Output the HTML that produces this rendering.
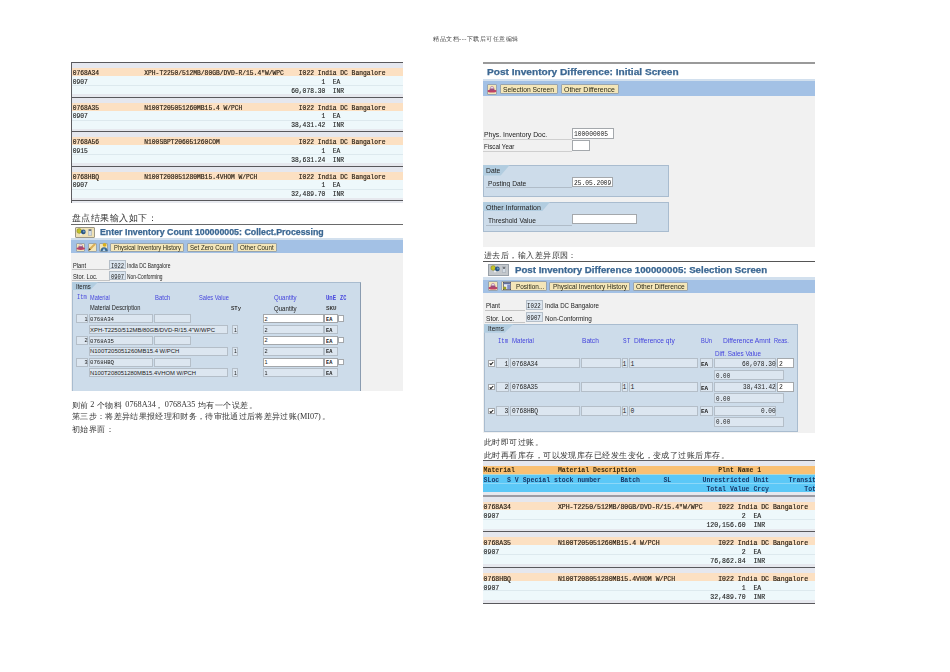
<!DOCTYPE html><html><head><meta charset="utf-8"><style>
*{margin:0;padding:0;box-sizing:border-box}
body{width:950px;height:672px;position:relative;background:#fff;overflow:hidden}
div{position:absolute}
.t{white-space:pre;line-height:1}
.m1{font-family:"Liberation Mono",monospace;font-size:6.29px;color:#404040;font-weight:bold}
.m2{font-family:"Liberation Mono",monospace;font-size:6.525px;color:#404040;font-weight:bold}
.cn{font-family:"Liberation Serif",serif;color:#333;letter-spacing:0.45px}
.s{font-family:"Liberation Sans",sans-serif;color:#303030}
.ttl{font-family:"Liberation Sans",sans-serif;font-weight:bold;color:#3d6c9c}
.hb{font-family:"Liberation Sans",sans-serif;color:#3c3ccc}
.btn{background:#f4e6b8;border:1px solid #98a4ae;border-radius:1px}
.fd{background:#dce6f0;border:1px solid #b4bec8}
.fi{background:#fff;border:1px solid #a4a8ac}
</style></head><body><div id="pg" style="left:0;top:0;width:950px;height:672px;filter:blur(0.3px)"><div class="t cn" style="left:433px;top:35.5px;font-size:6.4px;color:#444;letter-spacing:0.5px">精品文档---下载后可任意编辑</div>
<div style="left:71px;top:62px;width:332px;height:1px;background:#58585c"></div>
<div style="left:71px;top:63px;width:332px;height:5px;background:#e5e7ee"></div>
<div style="left:71px;top:68px;width:332px;height:8px;background:#fce0c2"></div>
<div style="left:71px;top:76px;width:332px;height:9px;background:#eef8fb"></div>
<div style="left:71px;top:85px;width:332px;height:1px;background:#dde9ee"></div>
<div style="left:71px;top:86px;width:332px;height:8px;background:#eef8fb"></div>
<div style="left:71px;top:94px;width:332px;height:3px;background:#e6e8ee"></div>
<div class="t m1" style="left:72.7px;top:71.0px;font-weight:normal;color:#2e2418;-webkit-text-stroke:0.18px #2e2418">0768A34            XPH-T2250/512MB/80GB/DVD-R/15.4"W/WPC    I022 India DC Bangalore</div>
<div class="t m1" style="left:72.7px;top:79.5px;font-weight:normal;color:#222;-webkit-text-stroke:0.12px #222">0907                                                              1  EA</div>
<div class="t m1" style="left:72.7px;top:88.6px;font-weight:normal;color:#222;-webkit-text-stroke:0.12px #222">                                                          60,078.30  INR</div>
<div style="left:71px;top:97px;width:332px;height:1px;background:#58585c"></div>
<div style="left:71px;top:98px;width:332px;height:5px;background:#e5e7ee"></div>
<div style="left:71px;top:103px;width:332px;height:8px;background:#fce0c2"></div>
<div style="left:71px;top:111px;width:332px;height:9px;background:#eef8fb"></div>
<div style="left:71px;top:120px;width:332px;height:1px;background:#dde9ee"></div>
<div style="left:71px;top:121px;width:332px;height:8px;background:#eef8fb"></div>
<div style="left:71px;top:129px;width:332px;height:2px;background:#e6e8ee"></div>
<div class="t m1" style="left:72.7px;top:105.5px;font-weight:normal;color:#2e2418;-webkit-text-stroke:0.18px #2e2418">0768A35            N100T205051260MB15.4 W/PCH               I022 India DC Bangalore</div>
<div class="t m1" style="left:72.7px;top:114.0px;font-weight:normal;color:#222;-webkit-text-stroke:0.12px #222">0907                                                              1  EA</div>
<div class="t m1" style="left:72.7px;top:123.1px;font-weight:normal;color:#222;-webkit-text-stroke:0.12px #222">                                                          38,431.42  INR</div>
<div style="left:71px;top:131px;width:332px;height:1px;background:#58585c"></div>
<div style="left:71px;top:132px;width:332px;height:5px;background:#e5e7ee"></div>
<div style="left:71px;top:137px;width:332px;height:8px;background:#fce0c2"></div>
<div style="left:71px;top:145px;width:332px;height:9px;background:#eef8fb"></div>
<div style="left:71px;top:154px;width:332px;height:1px;background:#dde9ee"></div>
<div style="left:71px;top:155px;width:332px;height:8px;background:#eef8fb"></div>
<div style="left:71px;top:163px;width:332px;height:3px;background:#e6e8ee"></div>
<div class="t m1" style="left:72.7px;top:140.0px;font-weight:normal;color:#2e2418;-webkit-text-stroke:0.18px #2e2418">0768A56            N100SBPT206051260COM                     I022 India DC Bangalore</div>
<div class="t m1" style="left:72.7px;top:148.5px;font-weight:normal;color:#222;-webkit-text-stroke:0.12px #222">0915                                                              1  EA</div>
<div class="t m1" style="left:72.7px;top:157.6px;font-weight:normal;color:#222;-webkit-text-stroke:0.12px #222">                                                          38,631.24  INR</div>
<div style="left:71px;top:166px;width:332px;height:1px;background:#58585c"></div>
<div style="left:71px;top:167px;width:332px;height:5px;background:#e5e7ee"></div>
<div style="left:71px;top:172px;width:332px;height:8px;background:#fce0c2"></div>
<div style="left:71px;top:180px;width:332px;height:9px;background:#eef8fb"></div>
<div style="left:71px;top:189px;width:332px;height:1px;background:#dde9ee"></div>
<div style="left:71px;top:190px;width:332px;height:8px;background:#eef8fb"></div>
<div style="left:71px;top:198px;width:332px;height:2px;background:#e6e8ee"></div>
<div class="t m1" style="left:72.7px;top:174.5px;font-weight:normal;color:#2e2418;-webkit-text-stroke:0.18px #2e2418">0768HBQ            N100T208051280MB15.4VHOM W/PCH           I022 India DC Bangalore</div>
<div class="t m1" style="left:72.7px;top:183.0px;font-weight:normal;color:#222;-webkit-text-stroke:0.12px #222">0907                                                              1  EA</div>
<div class="t m1" style="left:72.7px;top:192.1px;font-weight:normal;color:#222;-webkit-text-stroke:0.12px #222">                                                          32,489.70  INR</div>
<div style="left:71px;top:200px;width:332px;height:1px;background:#58585c"></div>
<div style="left:71px;top:201px;width:332px;height:2px;background:#e8eaf0"></div>
<div style="left:71px;top:62px;width:1px;height:141px;background:#5e5e62"></div>
<div class="t cn" style="left:72px;top:213.8px;font-size:8.6px">盘点结果输入如下：</div>
<!--SCREEN1-->
<div style="left:71px;top:224px;width:332px;height:1px;background:#6a6a6a"></div>
<div style="left:75.4px;top:227.3px;width:19.4px;height:10.3px;background:#efe2b6;border:1px solid #9c9888;border-radius:1px"></div>
<svg style="position:absolute;left:76.2px;top:228.2px" width="18" height="9" viewBox="0 0 18 9"><circle cx="3.2" cy="3.0" r="2.4" fill="#c4c428" stroke="#707020" stroke-width="0.4"/><circle cx="7.3" cy="3.9" r="2.4" fill="#2a5682"/><circle cx="7.8" cy="3.4" r="1" fill="#6a9ac8"/><path d="M5,5.2 L6.2,6.5 L5,7.8 L3.8,6.5Z" fill="#eef2f6"/><rect x="12.2" y="1.8" width="3.6" height="5.6" fill="#d4dce4" stroke="#909aa4" stroke-width="0.4"/><rect x="12.8" y="1.6" width="2.4" height="1" fill="#333"/></svg>
<div class="t" style="left:100.00px;top:229.41px;font-family:'Liberation Sans',sans-serif;font-weight:bold;font-size:8.140px;transform:scaleX(1.0840);transform-origin:0 0;color:#3b6792;-webkit-text-stroke:0.25px #3b6792">Enter Inventory Count 100000005: Collect.Processing</div>
<div style="left:71px;top:238px;width:332px;height:2px;background:#d2e0ee"></div>
<div style="left:71px;top:240px;width:332px;height:13px;background:#a3c1e5"></div>
<div class="btn" style="left:75.6px;top:242.6px;width:9.6px;height:9.2px"></div>
<div class="btn" style="left:87.5px;top:242.6px;width:9.6px;height:9.2px"></div>
<div class="btn" style="left:98.7px;top:242.6px;width:9.6px;height:9.2px"></div>
<svg style="position:absolute;left:75.9px;top:242.4px" width="9.5" height="9.5" viewBox="0 0 10 10"><ellipse cx="5" cy="6.9" rx="4.4" ry="1.5" fill="#bf4266"/><path d="M2.5,6.6 Q2.6,2.4 5,2.3 Q7.4,2.4 7.5,6.6 Z" fill="#9a4c7a"/><path d="M3.1,4.6 Q3.3,2.5 5,2.4 Q6.7,2.5 6.9,4.6 Z" fill="#e4dce6"/></svg>
<svg style="position:absolute;left:87.2px;top:242.4px" width="10" height="10" viewBox="0 0 10 10"><path d="M1.5,8.5 L2.2,6.2 L7.4,1.2 L8.9,2.6 L3.8,7.8 Z" fill="#d9ae58"/><path d="M1.5,8.5 L2.2,6.2 L3.8,7.8 Z" fill="#3a3020"/></svg>
<svg style="position:absolute;left:98.5px;top:242.4px" width="10" height="10" viewBox="0 0 10 10"><circle cx="5.6" cy="2.8" r="1.9" fill="#d8b020"/><path d="M1.3,9.2 Q1.8,5.2 5,5.2 Q8.4,5.2 8.8,9.2 Z" fill="#3a6a94"/><path d="M3.5,9 L5,6.2 L6.5,9Z" fill="#b8d8f0"/></svg>
<div class="btn" style="left:110.3px;top:242.7px;width:73.9px;height:9px"></div>
<div class="t" style="left:113.80px;top:244.94px;font-family:'Liberation Sans',sans-serif;font-weight:normal;font-size:6.686px;transform:scaleX(0.8711);transform-origin:0 0;color:#2a2a1a;">Physical Inventory History</div>
<div class="btn" style="left:187.4px;top:242.7px;width:46.8px;height:9px"></div>
<div class="t" style="left:190.00px;top:244.94px;font-family:'Liberation Sans',sans-serif;font-weight:normal;font-size:6.686px;transform:scaleX(0.9176);transform-origin:0 0;color:#2a2a1a;">Set Zero Count</div>
<div class="btn" style="left:237.4px;top:242.7px;width:39.4px;height:9px"></div>
<div class="t" style="left:240.00px;top:244.94px;font-family:'Liberation Sans',sans-serif;font-weight:normal;font-size:6.686px;transform:scaleX(0.9253);transform-origin:0 0;color:#2a2a1a;">Other Count</div>
<div style="left:71px;top:253px;width:332px;height:138px;background:#f1f1f1"></div>
<div class="t" style="left:73.20px;top:262.67px;font-family:'Liberation Sans',sans-serif;font-weight:normal;font-size:7.122px;transform:scaleX(0.8009);transform-origin:0 0;color:#222;">Plant</div>
<div style="left:72px;top:269px;width:37.5px;height:1px;background:#c4c4c4"></div>
<div class="fd" style="left:109.2px;top:260.2px;width:16.6px;height:9px"></div>
<div class="t" style="left:111.00px;top:262.88px;font-family:'Liberation Mono',monospace;font-weight:normal;font-size:6.677px;transform:scaleX(0.8237);transform-origin:0 0;color:#222;">I022</div>
<div class="t" style="left:127.40px;top:262.67px;font-family:'Liberation Sans',sans-serif;font-weight:normal;font-size:7.122px;transform:scaleX(0.6998);transform-origin:0 0;color:#222;">India DC Bangalore</div>
<div class="t" style="left:73.20px;top:273.87px;font-family:'Liberation Sans',sans-serif;font-weight:normal;font-size:7.122px;transform:scaleX(0.8142);transform-origin:0 0;color:#222;">Stor. Loc.</div>
<div style="left:72px;top:280px;width:37.5px;height:1px;background:#c4c4c4"></div>
<div class="fd" style="left:109.2px;top:271.2px;width:16.6px;height:9px"></div>
<div class="t" style="left:111.00px;top:273.98px;font-family:'Liberation Mono',monospace;font-weight:normal;font-size:6.677px;transform:scaleX(0.8237);transform-origin:0 0;color:#222;">0907</div>
<div class="t" style="left:127.40px;top:273.87px;font-family:'Liberation Sans',sans-serif;font-weight:normal;font-size:7.122px;transform:scaleX(0.6814);transform-origin:0 0;color:#222;">Non-Conforming</div>
<div style="left:72.2px;top:282.1px;width:288.6px;height:108.8px;background:#cddcea;border:1px solid #a9bccf;border-bottom:0;border-right-color:#8a9cb0"></div>
<svg style="position:absolute;left:72.2px;top:282.1px" width="26" height="8.4"><polygon points="0,0 26,0 18,8.4 0,8.4" fill="#b2cde0"/></svg>
<div class="t" style="left:75.50px;top:283.66px;font-family:'Liberation Sans',sans-serif;font-weight:normal;font-size:6.541px;transform:scaleX(0.9192);transform-origin:0 0;color:#222;">Items</div>
<div class="t" style="left:77.20px;top:295.30px;font-family:'Liberation Mono',monospace;font-weight:normal;font-size:6.525px;transform:scaleX(0.8174);transform-origin:0 0;color:#4444dd;">Itm</div>
<div class="t" style="left:90.20px;top:294.54px;font-family:'Liberation Sans',sans-serif;font-weight:normal;font-size:6.686px;transform:scaleX(0.8326);transform-origin:0 0;color:#4444dd;">Material</div>
<div class="t" style="left:155.00px;top:294.94px;font-family:'Liberation Sans',sans-serif;font-weight:normal;font-size:6.686px;transform:scaleX(0.8891);transform-origin:0 0;color:#4444dd;">Batch</div>
<div class="t" style="left:199.30px;top:294.94px;font-family:'Liberation Sans',sans-serif;font-weight:normal;font-size:6.686px;transform:scaleX(0.8497);transform-origin:0 0;color:#4444dd;">Sales Value</div>
<div class="t" style="left:274.30px;top:294.94px;font-family:'Liberation Sans',sans-serif;font-weight:normal;font-size:6.686px;transform:scaleX(0.9117);transform-origin:0 0;color:#4444dd;">Quantity</div>
<div class="t" style="left:325.80px;top:295.28px;font-family:'Liberation Mono',monospace;font-weight:bold;font-size:6.677px;transform:scaleX(0.8404);transform-origin:0 0;color:#4444dd;">UnE</div>
<div class="t" style="left:339.70px;top:295.28px;font-family:'Liberation Mono',monospace;font-weight:bold;font-size:6.677px;transform:scaleX(0.7863);transform-origin:0 0;color:#4444dd;">ZC</div>
<div class="t" style="left:90.20px;top:305.44px;font-family:'Liberation Sans',sans-serif;font-weight:normal;font-size:6.686px;transform:scaleX(0.8548);transform-origin:0 0;color:#222;">Material Description</div>
<div class="t" style="left:230.50px;top:306.25px;font-family:'Liberation Mono',monospace;font-weight:bold;font-size:6.070px;transform:scaleX(0.9244);transform-origin:0 0;color:#383838;">STy</div>
<div class="t" style="left:274.30px;top:305.84px;font-family:'Liberation Sans',sans-serif;font-weight:normal;font-size:6.686px;transform:scaleX(0.9117);transform-origin:0 0;color:#222;">Quantity</div>
<div class="t" style="left:325.80px;top:306.25px;font-family:'Liberation Mono',monospace;font-weight:bold;font-size:6.070px;transform:scaleX(0.9610);transform-origin:0 0;color:#383838;">SKU</div>
<div class="fd" style="left:75.5px;top:314.4px;width:12.8px;height:9px"></div>
<div class="t" style="left:84.60px;top:316.82px;font-family:'Liberation Sans',sans-serif;font-weight:normal;font-size:5.523px;color:#222;">1</div>
<div class="fd" style="left:88.6px;top:314.4px;width:64.6px;height:9px"></div>
<div class="t" style="left:90.20px;top:317.11px;font-family:'Liberation Mono',monospace;font-weight:normal;font-size:5.463px;transform:scaleX(1.0501);transform-origin:0 0;color:#222;">0768A34</div>
<div class="fd" style="left:153.8px;top:314.4px;width:37px;height:9px"></div>
<div class="fi" style="left:263.4px;top:314.4px;width:60.4px;height:9px"></div>
<div class="t" style="left:264.60px;top:316.82px;font-family:'Liberation Sans',sans-serif;font-weight:normal;font-size:5.523px;color:#222;">2</div>
<div class="fi" style="left:324.1px;top:314.4px;width:13.5px;height:9px"></div>
<div class="t" style="left:325.80px;top:317.08px;font-family:'Liberation Mono',monospace;font-weight:bold;font-size:5.766px;transform:scaleX(0.9097);transform-origin:0 0;color:#222;">EA</div>
<div class="fi" style="left:338.4px;top:315.4px;width:5.9px;height:6.3px"></div>
<div class="fd" style="left:88.6px;top:325.2px;width:139.6px;height:8.8px"></div>
<div class="t" style="left:90.20px;top:327.62px;font-family:'Liberation Sans',sans-serif;font-weight:normal;font-size:5.523px;transform:scaleX(1.0743);transform-origin:0 0;color:#222;">XPH-T2250/512MB/80GB/DVD-R/15.4"W/WPC</div>
<div class="fd" style="left:232.3px;top:325.2px;width:6px;height:8.8px"></div>
<div class="t" style="left:234.00px;top:327.67px;font-family:'Liberation Sans',sans-serif;font-weight:normal;font-size:5.233px;color:#222;">1</div>
<div class="fd" style="left:263.4px;top:325.2px;width:60.4px;height:8.8px"></div>
<div class="t" style="left:264.60px;top:327.62px;font-family:'Liberation Sans',sans-serif;font-weight:normal;font-size:5.523px;color:#222;">2</div>
<div class="fd" style="left:324.1px;top:325.2px;width:13.5px;height:8.8px"></div>
<div class="t" style="left:325.80px;top:327.88px;font-family:'Liberation Mono',monospace;font-weight:bold;font-size:5.766px;transform:scaleX(0.9097);transform-origin:0 0;color:#222;">EA</div>
<div class="fd" style="left:75.5px;top:335.95px;width:12.8px;height:9px"></div>
<div class="t" style="left:84.60px;top:338.37px;font-family:'Liberation Sans',sans-serif;font-weight:normal;font-size:5.523px;color:#222;">2</div>
<div class="fd" style="left:88.6px;top:335.95px;width:64.6px;height:9px"></div>
<div class="t" style="left:90.20px;top:338.66px;font-family:'Liberation Mono',monospace;font-weight:normal;font-size:5.463px;transform:scaleX(1.0501);transform-origin:0 0;color:#222;">0768A35</div>
<div class="fd" style="left:153.8px;top:335.95px;width:37px;height:9px"></div>
<div class="fi" style="left:263.4px;top:335.95px;width:60.4px;height:9px"></div>
<div class="t" style="left:264.60px;top:338.37px;font-family:'Liberation Sans',sans-serif;font-weight:normal;font-size:5.523px;color:#222;">2</div>
<div class="fi" style="left:324.1px;top:335.95px;width:13.5px;height:9px"></div>
<div class="t" style="left:325.80px;top:338.63px;font-family:'Liberation Mono',monospace;font-weight:bold;font-size:5.766px;transform:scaleX(0.9097);transform-origin:0 0;color:#222;">EA</div>
<div class="fi" style="left:338.4px;top:336.95px;width:5.9px;height:6.3px"></div>
<div class="fd" style="left:88.6px;top:346.75px;width:139.6px;height:8.8px"></div>
<div class="t" style="left:90.20px;top:349.17px;font-family:'Liberation Sans',sans-serif;font-weight:normal;font-size:5.523px;transform:scaleX(1.0757);transform-origin:0 0;color:#222;">N100T205051260MB15.4 W/PCH</div>
<div class="fd" style="left:232.3px;top:346.75px;width:6px;height:8.8px"></div>
<div class="t" style="left:234.00px;top:349.22px;font-family:'Liberation Sans',sans-serif;font-weight:normal;font-size:5.233px;color:#222;">1</div>
<div class="fd" style="left:263.4px;top:346.75px;width:60.4px;height:8.8px"></div>
<div class="t" style="left:264.60px;top:349.17px;font-family:'Liberation Sans',sans-serif;font-weight:normal;font-size:5.523px;color:#222;">2</div>
<div class="fd" style="left:324.1px;top:346.75px;width:13.5px;height:8.8px"></div>
<div class="t" style="left:325.80px;top:349.43px;font-family:'Liberation Mono',monospace;font-weight:bold;font-size:5.766px;transform:scaleX(0.9097);transform-origin:0 0;color:#222;">EA</div>
<div class="fd" style="left:75.5px;top:357.5px;width:12.8px;height:9px"></div>
<div class="t" style="left:84.60px;top:359.92px;font-family:'Liberation Sans',sans-serif;font-weight:normal;font-size:5.523px;color:#222;">3</div>
<div class="fd" style="left:88.6px;top:357.5px;width:64.6px;height:9px"></div>
<div class="t" style="left:90.20px;top:360.21px;font-family:'Liberation Mono',monospace;font-weight:normal;font-size:5.463px;transform:scaleX(1.0501);transform-origin:0 0;color:#222;">0768HBQ</div>
<div class="fd" style="left:153.8px;top:357.5px;width:37px;height:9px"></div>
<div class="fi" style="left:263.4px;top:357.5px;width:60.4px;height:9px"></div>
<div class="t" style="left:264.60px;top:359.92px;font-family:'Liberation Sans',sans-serif;font-weight:normal;font-size:5.523px;color:#222;">1</div>
<div class="fi" style="left:324.1px;top:357.5px;width:13.5px;height:9px"></div>
<div class="t" style="left:325.80px;top:360.18px;font-family:'Liberation Mono',monospace;font-weight:bold;font-size:5.766px;transform:scaleX(0.9097);transform-origin:0 0;color:#222;">EA</div>
<div class="fi" style="left:338.4px;top:358.5px;width:5.9px;height:6.3px"></div>
<div class="fd" style="left:88.6px;top:368.3px;width:139.6px;height:8.8px"></div>
<div class="t" style="left:90.20px;top:370.72px;font-family:'Liberation Sans',sans-serif;font-weight:normal;font-size:5.523px;transform:scaleX(1.0644);transform-origin:0 0;color:#222;">N100T208051280MB15.4VHOM W/PCH</div>
<div class="fd" style="left:232.3px;top:368.3px;width:6px;height:8.8px"></div>
<div class="t" style="left:234.00px;top:370.77px;font-family:'Liberation Sans',sans-serif;font-weight:normal;font-size:5.233px;color:#222;">1</div>
<div class="fd" style="left:263.4px;top:368.3px;width:60.4px;height:8.8px"></div>
<div class="t" style="left:264.60px;top:370.72px;font-family:'Liberation Sans',sans-serif;font-weight:normal;font-size:5.523px;color:#222;">1</div>
<div class="fd" style="left:324.1px;top:368.3px;width:13.5px;height:8.8px"></div>
<div class="t" style="left:325.80px;top:370.98px;font-family:'Liberation Mono',monospace;font-weight:bold;font-size:5.766px;transform:scaleX(0.9097);transform-origin:0 0;color:#222;">EA</div>
<div class="t cn" style="left:72px;top:401.5px;font-size:8.4px">则前</div>
<div class="t cn" style="left:90.3px;top:401.2px;font-size:8.2px;letter-spacing:0">2</div>
<div class="t cn" style="left:97px;top:401.5px;font-size:8.4px">个物料</div>
<div class="t cn" style="left:125.3px;top:401.2px;font-size:8.2px;letter-spacing:0">0768A34</div>
<div class="t cn" style="left:155px;top:401.5px;font-size:8.4px">，</div>
<div class="t cn" style="left:164.8px;top:401.2px;font-size:8.2px;letter-spacing:0">0768A35</div>
<div class="t cn" style="left:198px;top:401.5px;font-size:8.4px">均有一个误差。</div>
<div class="t cn" style="left:72px;top:413.3px;font-size:8.4px;letter-spacing:0.33px">第三步：将差异结果报经理和财务，待审批通过后将差异过账</div>
<div class="t cn" style="left:297.2px;top:413px;font-size:8.2px;letter-spacing:0">(MI07)</div>
<div class="t cn" style="left:321.5px;top:413.3px;font-size:8.4px">。</div>
<div class="t cn" style="left:72px;top:426.3px;font-size:8.4px">初始界面：</div>
<!--SCREEN2-->
<div style="left:483px;top:62px;width:332px;height:2px;background:#9a9a9a"></div>
<div class="t" style="left:486.60px;top:68.17px;font-family:'Liberation Sans',sans-serif;font-weight:bold;font-size:9.012px;transform:scaleX(1.1237);transform-origin:0 0;color:#3b6792;-webkit-text-stroke:0.25px #3b6792">Post Inventory Difference: Initial Screen</div>
<div style="left:483px;top:79px;width:332px;height:2px;background:#d2e0ee"></div>
<div style="left:483px;top:81px;width:332px;height:15px;background:#a3c1e5"></div>
<div class="btn" style="left:486.5px;top:84px;width:10.5px;height:10.5px"></div>
<svg style="position:absolute;left:486.8px;top:84.2px" width="10.0" height="10.0" viewBox="0 0 10 10"><ellipse cx="5" cy="6.9" rx="4.4" ry="1.5" fill="#bf4266"/><path d="M2.5,6.6 Q2.6,2.4 5,2.3 Q7.4,2.4 7.5,6.6 Z" fill="#9a4c7a"/><path d="M3.1,4.6 Q3.3,2.5 5,2.4 Q6.7,2.5 6.9,4.6 Z" fill="#e4dce6"/></svg>
<div class="btn" style="left:499.8px;top:83.8px;width:58.5px;height:10.5px"></div>
<div class="t" style="left:503.20px;top:86.92px;font-family:'Liberation Sans',sans-serif;font-weight:normal;font-size:6.831px;transform:scaleX(0.9856);transform-origin:0 0;color:#2a2a1a;">Selection Screen</div>
<div class="btn" style="left:561px;top:83.8px;width:58.2px;height:10.5px"></div>
<div class="t" style="left:564.00px;top:86.92px;font-family:'Liberation Sans',sans-serif;font-weight:normal;font-size:6.831px;transform:scaleX(1.0202);transform-origin:0 0;color:#2a2a1a;">Other Difference</div>
<div style="left:483px;top:96px;width:332px;height:151px;background:#f1f1f1"></div>
<div class="t" style="left:484.00px;top:130.95px;font-family:'Liberation Sans',sans-serif;font-weight:normal;font-size:7.267px;transform:scaleX(0.9456);transform-origin:0 0;color:#222;">Phys. Inventory Doc.</div>
<div style="left:483px;top:138.5px;width:89.2px;height:1.2px;background:#cfcfcf"></div>
<div class="fi" style="left:572.2px;top:128.2px;width:41.5px;height:10.8px"></div>
<div class="t" style="left:573.90px;top:131.25px;font-family:'Liberation Mono',monospace;font-weight:normal;font-size:6.980px;transform:scaleX(0.9045);transform-origin:0 0;color:#222;">100000005</div>
<div class="t" style="left:484.00px;top:142.75px;font-family:'Liberation Sans',sans-serif;font-weight:normal;font-size:7.267px;transform:scaleX(0.8579);transform-origin:0 0;color:#222;">Fiscal Year</div>
<div style="left:483px;top:150.6px;width:89.2px;height:1.2px;background:#cfcfcf"></div>
<div class="fi" style="left:572.2px;top:140.4px;width:18.1px;height:11px"></div>
<div style="left:483.2px;top:165.2px;width:185.4px;height:31.4px;background:#cddcea;border:1px solid #a9bccf"></div>
<svg style="position:absolute;left:483.2px;top:165.2px" width="26.7" height="10.4"><polygon points="0,0 26.7,0 17.7,10.4 0,10.4" fill="#b2cde0"/></svg>
<div class="t" style="left:485.90px;top:167.25px;font-family:'Liberation Sans',sans-serif;font-weight:normal;font-size:7.267px;transform:scaleX(0.9317);transform-origin:0 0;color:#222;">Date</div>
<div class="t" style="left:487.70px;top:179.85px;font-family:'Liberation Sans',sans-serif;font-weight:normal;font-size:7.267px;transform:scaleX(0.9228);transform-origin:0 0;color:#222;">Posting Date</div>
<div style="left:486.3px;top:187.1px;width:85.9px;height:1px;background:#b0bcc8"></div>
<div class="fi" style="left:572.2px;top:177.3px;width:41.3px;height:10.1px"></div>
<div class="t" style="left:573.90px;top:180.25px;font-family:'Liberation Mono',monospace;font-weight:normal;font-size:6.980px;transform:scaleX(0.8928);transform-origin:0 0;color:#222;">25.05.2009</div>
<div style="left:483.2px;top:202.2px;width:185.4px;height:30.3px;background:#cddcea;border:1px solid #a9bccf"></div>
<svg style="position:absolute;left:483.2px;top:202.2px" width="67.1" height="9.3"><polygon points="0,0 67.1,0 59.099999999999994,9.3 0,9.3" fill="#b2cde0"/></svg>
<div class="t" style="left:485.90px;top:203.99px;font-family:'Liberation Sans',sans-serif;font-weight:normal;font-size:6.977px;transform:scaleX(1.0113);transform-origin:0 0;color:#222;">Other Information</div>
<div class="t" style="left:488.00px;top:216.65px;font-family:'Liberation Sans',sans-serif;font-weight:normal;font-size:7.267px;transform:scaleX(0.9163);transform-origin:0 0;color:#222;">Threshold Value</div>
<div style="left:486.3px;top:224.5px;width:85.9px;height:1px;background:#b0bcc8"></div>
<div class="fi" style="left:572.2px;top:213.6px;width:64.8px;height:10.9px"></div>
<div class="t cn" style="left:484px;top:251.5px;font-size:8.4px">进去后，输入差异原因：</div>
<!--SCREEN3-->
<div style="left:483px;top:261px;width:332px;height:1px;background:#555"></div>
<div style="left:488.2px;top:264.2px;width:20.8px;height:11.4px;background:#c4c8cc;border:1px solid #98a0a8"></div>
<svg style="position:absolute;left:489.6px;top:265.2px" width="18" height="9" viewBox="0 0 18 9"><circle cx="3.2" cy="3.0" r="2.4" fill="#c4c428" stroke="#707020" stroke-width="0.4"/><circle cx="7.3" cy="3.9" r="2.4" fill="#2a5682"/><circle cx="7.8" cy="3.4" r="1" fill="#6a9ac8"/><path d="M5,5.2 L6.2,6.5 L5,7.8 L3.8,6.5Z" fill="#eef2f6"/><rect x="12.2" y="1.8" width="3.6" height="5.6" fill="#d4dce4" stroke="#909aa4" stroke-width="0.4"/><path d="M12.6,2.4 L15.4,2.4 L14,4 Z" fill="#111"/></svg>
<div class="t" style="left:514.90px;top:266.44px;font-family:'Liberation Sans',sans-serif;font-weight:bold;font-size:8.576px;transform:scaleX(1.1295);transform-origin:0 0;color:#3b6792;-webkit-text-stroke:0.25px #3b6792">Post Inventory Difference 100000005: Selection Screen</div>
<div style="left:483px;top:277px;width:332px;height:3px;background:#d2e0ee"></div>
<div style="left:483px;top:280px;width:332px;height:13px;background:#a3c1e5"></div>
<div class="btn" style="left:488.3px;top:281px;width:10.1px;height:10.4px"></div>
<svg style="position:absolute;left:488.4px;top:281.2px" width="10.0" height="10.0" viewBox="0 0 10 10"><ellipse cx="5" cy="6.9" rx="4.4" ry="1.5" fill="#bf4266"/><path d="M2.5,6.6 Q2.6,2.4 5,2.3 Q7.4,2.4 7.5,6.6 Z" fill="#9a4c7a"/><path d="M3.1,4.6 Q3.3,2.5 5,2.4 Q6.7,2.5 6.9,4.6 Z" fill="#e4dce6"/></svg>
<div class="btn" style="left:501.3px;top:281.4px;width:46px;height:10px"></div>
<svg style="position:absolute;left:503.3px;top:282.4px" width="8" height="8" viewBox="0 0 8 8"><rect x="0.3" y="0.3" width="7.4" height="7.4" fill="#e8ecf4" stroke="#303040" stroke-width="0.6"/><rect x="0.6" y="0.6" width="6.8" height="1.6" fill="#6070a0"/><rect x="4.2" y="2.6" width="3" height="4.6" fill="#8090c8"/><circle cx="1.8" cy="6" r="1.6" fill="#a0a020"/></svg>
<div class="t" style="left:515.70px;top:283.19px;font-family:'Liberation Sans',sans-serif;font-weight:normal;font-size:6.977px;transform:scaleX(0.9238);transform-origin:0 0;color:#2a2a1a;">Position...</div>
<div class="btn" style="left:549.3px;top:281.6px;width:80.8px;height:9.7px"></div>
<div class="t" style="left:552.60px;top:283.92px;font-family:'Liberation Sans',sans-serif;font-weight:normal;font-size:6.831px;transform:scaleX(0.9429);transform-origin:0 0;color:#2a2a1a;">Physical Inventory History</div>
<div class="btn" style="left:632.6px;top:281.6px;width:55.6px;height:9.7px"></div>
<div class="t" style="left:636.00px;top:283.92px;font-family:'Liberation Sans',sans-serif;font-weight:normal;font-size:6.831px;transform:scaleX(0.9762);transform-origin:0 0;color:#2a2a1a;">Other Difference</div>
<div style="left:483px;top:293px;width:332px;height:140px;background:#f1f1f1"></div>
<div class="t" style="left:485.90px;top:302.92px;font-family:'Liberation Sans',sans-serif;font-weight:normal;font-size:6.831px;transform:scaleX(0.8928);transform-origin:0 0;color:#222;">Plant</div>
<div style="left:484.9px;top:310.2px;width:40.6px;height:1px;background:#c4c4c4"></div>
<div class="fd" style="left:525.5px;top:300.2px;width:17.2px;height:10.1px"></div>
<div class="t" style="left:527.20px;top:303.37px;font-family:'Liberation Mono',monospace;font-weight:normal;font-size:6.829px;transform:scaleX(0.8421);transform-origin:0 0;color:#222;">I022</div>
<div class="t" style="left:545.00px;top:302.92px;font-family:'Liberation Sans',sans-serif;font-weight:normal;font-size:6.831px;transform:scaleX(0.9057);transform-origin:0 0;color:#222;">India DC Bangalore</div>
<div class="t" style="left:485.90px;top:314.79px;font-family:'Liberation Sans',sans-serif;font-weight:normal;font-size:6.977px;transform:scaleX(0.9567);transform-origin:0 0;color:#222;">Stor. Loc.</div>
<div style="left:484.9px;top:322.1px;width:40.6px;height:1px;background:#c4c4c4"></div>
<div class="fd" style="left:525.5px;top:312.4px;width:17.2px;height:9.8px"></div>
<div class="t" style="left:527.20px;top:315.27px;font-family:'Liberation Mono',monospace;font-weight:normal;font-size:6.829px;transform:scaleX(0.8421);transform-origin:0 0;color:#222;">0907</div>
<div class="t" style="left:545.00px;top:314.79px;font-family:'Liberation Sans',sans-serif;font-weight:normal;font-size:6.977px;transform:scaleX(0.9144);transform-origin:0 0;color:#222;">Non-Conforming</div>
<div style="left:484px;top:324.3px;width:314px;height:107.9px;background:#cddcea;border:1px solid #a9bccf"></div>
<svg style="position:absolute;left:484px;top:324.3px" width="29.7" height="8.8"><polygon points="0,0 29.7,0 20.4,8.8 0,8.8" fill="#b2cde0"/></svg>
<div class="t" style="left:488.00px;top:326.04px;font-family:'Liberation Sans',sans-serif;font-weight:normal;font-size:6.686px;transform:scaleX(0.9787);transform-origin:0 0;color:#222;">Items</div>
<div class="t" style="left:497.90px;top:338.37px;font-family:'Liberation Mono',monospace;font-weight:normal;font-size:6.829px;transform:scaleX(0.8217);transform-origin:0 0;color:#4444dd;">Itm</div>
<div class="t" style="left:511.80px;top:337.74px;font-family:'Liberation Sans',sans-serif;font-weight:normal;font-size:6.686px;transform:scaleX(0.9209);transform-origin:0 0;color:#4444dd;">Material</div>
<div class="t" style="left:581.70px;top:337.72px;font-family:'Liberation Sans',sans-serif;font-weight:normal;font-size:6.831px;transform:scaleX(0.9618);transform-origin:0 0;color:#4444dd;">Batch</div>
<div class="t" style="left:623.00px;top:338.37px;font-family:'Liberation Mono',monospace;font-weight:normal;font-size:6.829px;transform:scaleX(0.8909);transform-origin:0 0;color:#4444dd;">ST</div>
<div class="t" style="left:634.00px;top:337.72px;font-family:'Liberation Sans',sans-serif;font-weight:normal;font-size:6.831px;transform:scaleX(0.9686);transform-origin:0 0;color:#4444dd;">Difference qty</div>
<div class="t" style="left:700.80px;top:338.02px;font-family:'Liberation Sans',sans-serif;font-weight:normal;font-size:6.831px;transform:scaleX(0.8279);transform-origin:0 0;color:#4444dd;">BUn</div>
<div class="t" style="left:723.00px;top:338.02px;font-family:'Liberation Sans',sans-serif;font-weight:normal;font-size:6.831px;transform:scaleX(0.9799);transform-origin:0 0;color:#4444dd;">Difference Amnt</div>
<div class="t" style="left:774.30px;top:338.02px;font-family:'Liberation Sans',sans-serif;font-weight:normal;font-size:6.831px;transform:scaleX(0.8238);transform-origin:0 0;color:#4444dd;">Reas.</div>
<div class="t" style="left:715.20px;top:349.99px;font-family:'Liberation Sans',sans-serif;font-weight:normal;font-size:6.977px;transform:scaleX(0.9052);transform-origin:0 0;color:#4444dd;">Diff. Sales Value</div>
<div class="fi" style="left:488.2px;top:360.20000000000005px;width:6.8px;height:6.6px"></div>
<svg style="position:absolute;left:488.2px;top:360.20000000000005px" width="7" height="7" viewBox="0 0 7 7"><path d="M1.7,3.3 L2.9,4.7 L5.2,2.0" stroke="#222" stroke-width="1.1" fill="none"/></svg>
<div class="fd" style="left:495.8px;top:358.1px;width:13.5px;height:10.1px"></div>
<div class="t" style="left:504.60px;top:361.62px;font-family:'Liberation Mono',monospace;font-weight:normal;font-size:6.373px;color:#222;">1</div>
<div class="fd" style="left:510.1px;top:358.1px;width:69.9px;height:10.1px"></div>
<div class="t" style="left:511.80px;top:361.62px;font-family:'Liberation Mono',monospace;font-weight:normal;font-size:6.373px;transform:scaleX(0.9748);transform-origin:0 0;color:#222;">0768A34</div>
<div class="fd" style="left:580.8px;top:358.1px;width:40px;height:10.1px"></div>
<div class="fd" style="left:621.7px;top:358.1px;width:6.6px;height:10.1px"></div>
<div class="t" style="left:622.60px;top:361.62px;font-family:'Liberation Mono',monospace;font-weight:normal;font-size:6.373px;color:#222;">1</div>
<div class="fd" style="left:629.3px;top:358.1px;width:69px;height:10.1px"></div>
<div class="t" style="left:630.60px;top:361.62px;font-family:'Liberation Mono',monospace;font-weight:normal;font-size:6.373px;color:#222;">1</div>
<div class="fd" style="left:699.6px;top:358.1px;width:13.6px;height:10.1px"></div>
<div class="t" style="left:700.80px;top:361.87px;font-family:'Liberation Mono',monospace;font-weight:bold;font-size:5.918px;transform:scaleX(1.0130);transform-origin:0 0;color:#222;">EA</div>
<div class="fd" style="left:714.3px;top:358.1px;width:61.9px;height:10.1px"></div>
<div class="t" style="left:741.50px;top:361.62px;font-family:'Liberation Mono',monospace;font-weight:normal;font-size:6.373px;transform:scaleX(0.9790);transform-origin:0 0;color:#222;">60,078.30</div>
<div class="fi" style="left:776.8px;top:358.1px;width:17.7px;height:10.1px"></div>
<div class="t" style="left:779.00px;top:361.62px;font-family:'Liberation Mono',monospace;font-weight:normal;font-size:6.373px;color:#222;">2</div>
<div class="fd" style="left:714.2px;top:370.3px;width:69.5px;height:10px"></div>
<div class="t" style="left:715.80px;top:373.52px;font-family:'Liberation Mono',monospace;font-weight:normal;font-size:6.373px;transform:scaleX(0.9284);transform-origin:0 0;color:#222;">0.00</div>
<div class="fi" style="left:488.2px;top:383.90000000000003px;width:6.8px;height:6.6px"></div>
<svg style="position:absolute;left:488.2px;top:383.90000000000003px" width="7" height="7" viewBox="0 0 7 7"><path d="M1.7,3.3 L2.9,4.7 L5.2,2.0" stroke="#222" stroke-width="1.1" fill="none"/></svg>
<div class="fd" style="left:495.8px;top:381.8px;width:13.5px;height:10.1px"></div>
<div class="t" style="left:504.60px;top:385.32px;font-family:'Liberation Mono',monospace;font-weight:normal;font-size:6.373px;color:#222;">2</div>
<div class="fd" style="left:510.1px;top:381.8px;width:69.9px;height:10.1px"></div>
<div class="t" style="left:511.80px;top:385.32px;font-family:'Liberation Mono',monospace;font-weight:normal;font-size:6.373px;transform:scaleX(0.9748);transform-origin:0 0;color:#222;">0768A35</div>
<div class="fd" style="left:580.8px;top:381.8px;width:40px;height:10.1px"></div>
<div class="fd" style="left:621.7px;top:381.8px;width:6.6px;height:10.1px"></div>
<div class="t" style="left:622.60px;top:385.32px;font-family:'Liberation Mono',monospace;font-weight:normal;font-size:6.373px;color:#222;">1</div>
<div class="fd" style="left:629.3px;top:381.8px;width:69px;height:10.1px"></div>
<div class="t" style="left:630.60px;top:385.32px;font-family:'Liberation Mono',monospace;font-weight:normal;font-size:6.373px;color:#222;">1</div>
<div class="fd" style="left:699.6px;top:381.8px;width:13.6px;height:10.1px"></div>
<div class="t" style="left:700.80px;top:385.57px;font-family:'Liberation Mono',monospace;font-weight:bold;font-size:5.918px;transform:scaleX(1.0130);transform-origin:0 0;color:#222;">EA</div>
<div class="fd" style="left:714.3px;top:381.8px;width:61.9px;height:10.1px"></div>
<div class="t" style="left:742.50px;top:385.32px;font-family:'Liberation Mono',monospace;font-weight:normal;font-size:6.373px;transform:scaleX(0.9500);transform-origin:0 0;color:#222;">38,431.42</div>
<div class="fi" style="left:776.8px;top:381.8px;width:17.7px;height:10.1px"></div>
<div class="t" style="left:779.00px;top:385.32px;font-family:'Liberation Mono',monospace;font-weight:normal;font-size:6.373px;color:#222;">2</div>
<div class="fd" style="left:714.2px;top:393.4px;width:69.5px;height:10px"></div>
<div class="t" style="left:715.80px;top:396.62px;font-family:'Liberation Mono',monospace;font-weight:normal;font-size:6.373px;transform:scaleX(0.9284);transform-origin:0 0;color:#222;">0.00</div>
<div class="fi" style="left:488.2px;top:407.6px;width:6.8px;height:6.6px"></div>
<svg style="position:absolute;left:488.2px;top:407.6px" width="7" height="7" viewBox="0 0 7 7"><path d="M1.7,3.3 L2.9,4.7 L5.2,2.0" stroke="#222" stroke-width="1.1" fill="none"/></svg>
<div class="fd" style="left:495.8px;top:405.5px;width:13.5px;height:10.1px"></div>
<div class="t" style="left:504.60px;top:409.02px;font-family:'Liberation Mono',monospace;font-weight:normal;font-size:6.373px;color:#222;">3</div>
<div class="fd" style="left:510.1px;top:405.5px;width:69.9px;height:10.1px"></div>
<div class="t" style="left:511.80px;top:409.02px;font-family:'Liberation Mono',monospace;font-weight:normal;font-size:6.373px;transform:scaleX(0.9748);transform-origin:0 0;color:#222;">0768HBQ</div>
<div class="fd" style="left:580.8px;top:405.5px;width:40px;height:10.1px"></div>
<div class="fd" style="left:621.7px;top:405.5px;width:6.6px;height:10.1px"></div>
<div class="t" style="left:622.60px;top:409.02px;font-family:'Liberation Mono',monospace;font-weight:normal;font-size:6.373px;color:#222;">1</div>
<div class="fd" style="left:629.3px;top:405.5px;width:69px;height:10.1px"></div>
<div class="t" style="left:630.60px;top:409.02px;font-family:'Liberation Mono',monospace;font-weight:normal;font-size:6.373px;color:#222;">0</div>
<div class="fd" style="left:699.6px;top:405.5px;width:13.6px;height:10.1px"></div>
<div class="t" style="left:700.80px;top:409.27px;font-family:'Liberation Mono',monospace;font-weight:bold;font-size:5.918px;transform:scaleX(1.0130);transform-origin:0 0;color:#222;">EA</div>
<div class="fd" style="left:714.3px;top:405.5px;width:61.9px;height:10.1px"></div>
<div class="t" style="left:760.50px;top:409.02px;font-family:'Liberation Mono',monospace;font-weight:normal;font-size:6.373px;transform:scaleX(0.9610);transform-origin:0 0;color:#222;">0.00</div>
<div class="fd" style="left:714.2px;top:416.6px;width:69.5px;height:10px"></div>
<div class="t" style="left:715.80px;top:419.82px;font-family:'Liberation Mono',monospace;font-weight:normal;font-size:6.373px;transform:scaleX(0.9284);transform-origin:0 0;color:#222;">0.00</div>
<div class="t cn" style="left:484px;top:438.8px;font-size:8.4px">此时即可过账。</div>
<div class="t cn" style="left:484px;top:451.6px;font-size:8.4px">此时再看库存，可以发现库存已经发生变化，变成了过账后库存。</div>
<!--LIST2-->
<div style="left:483px;top:460px;width:332px;height:1px;background:#5e5e62"></div>
<div style="left:483px;top:461px;width:332px;height:5px;background:#e5e7ee"></div>
<div style="left:483px;top:466px;width:332px;height:8px;background:#f9c073"></div>
<div style="left:483px;top:474px;width:332px;height:1px;background:#b4d8d0"></div>
<div style="left:483px;top:475px;width:332px;height:8px;background:#5bc8f7"></div>
<div style="left:483px;top:483px;width:332px;height:1px;background:#8cd8f8"></div>
<div style="left:483px;top:484px;width:332px;height:8px;background:#5bc8f7"></div>
<div style="left:483px;top:492px;width:332px;height:3px;background:#e6e8ee"></div>
<div class="t m2" style="left:483.6px;top:468.2px;color:#3a2a10">Material           Material Description                     Plnt Name 1</div>
<div class="t m2" style="left:483.6px;top:477.6px;color:#183868">SLoc  S V Special stock number     Batch      SL        Unrestricted Unit     Transit</div>
<div class="t m2" style="left:483.6px;top:486.6px;color:#183868">                                                         Total Value Crcy         Tot</div>
<div style="left:815px;top:455px;width:60px;height:40px;background:#fff"></div>
<div style="left:483px;top:495px;width:332px;height:2px;background:#9c9ca4"></div>
<div style="left:483px;top:497px;width:332px;height:5px;background:#e5e7ee"></div>
<div style="left:483px;top:502px;width:332px;height:8px;background:#fce0c2"></div>
<div style="left:483px;top:510px;width:332px;height:9px;background:#eef8fb"></div>
<div style="left:483px;top:519px;width:332px;height:1px;background:#dde9ee"></div>
<div style="left:483px;top:520px;width:332px;height:9px;background:#eef8fb"></div>
<div style="left:483px;top:529px;width:332px;height:2px;background:#e6e8ee"></div>
<div class="t m2" style="left:483.6px;top:505.1px;font-weight:normal;color:#2e2418;-webkit-text-stroke:0.18px #2e2418">0768A34            XPH-T2250/512MB/80GB/DVD-R/15.4"W/WPC    I022 India DC Bangalore</div>
<div class="t m2" style="left:483.6px;top:514.0px;font-weight:normal;color:#222;-webkit-text-stroke:0.12px #222">0907                                                              2  EA</div>
<div class="t m2" style="left:483.6px;top:523.2px;font-weight:normal;color:#222;-webkit-text-stroke:0.12px #222">                                                         120,156.60  INR</div>
<div style="left:483px;top:531px;width:332px;height:1px;background:#58585c"></div>
<div style="left:483px;top:532px;width:332px;height:5px;background:#e5e7ee"></div>
<div style="left:483px;top:537px;width:332px;height:8px;background:#fce0c2"></div>
<div style="left:483px;top:545px;width:332px;height:9px;background:#eef8fb"></div>
<div style="left:483px;top:554px;width:332px;height:1px;background:#dde9ee"></div>
<div style="left:483px;top:555px;width:332px;height:9px;background:#eef8fb"></div>
<div style="left:483px;top:564px;width:332px;height:3px;background:#e6e8ee"></div>
<div class="t m2" style="left:483.6px;top:541.1px;font-weight:normal;color:#2e2418;-webkit-text-stroke:0.18px #2e2418">0768A35            N100T205051260MB15.4 W/PCH               I022 India DC Bangalore</div>
<div class="t m2" style="left:483.6px;top:550.0px;font-weight:normal;color:#222;-webkit-text-stroke:0.12px #222">0907                                                              2  EA</div>
<div class="t m2" style="left:483.6px;top:559.2px;font-weight:normal;color:#222;-webkit-text-stroke:0.12px #222">                                                          76,862.84  INR</div>
<div style="left:483px;top:567px;width:332px;height:1px;background:#58585c"></div>
<div style="left:483px;top:568px;width:332px;height:5px;background:#e5e7ee"></div>
<div style="left:483px;top:573px;width:332px;height:8px;background:#fce0c2"></div>
<div style="left:483px;top:581px;width:332px;height:9px;background:#eef8fb"></div>
<div style="left:483px;top:590px;width:332px;height:1px;background:#dde9ee"></div>
<div style="left:483px;top:591px;width:332px;height:9px;background:#eef8fb"></div>
<div style="left:483px;top:600px;width:332px;height:3px;background:#e6e8ee"></div>
<div class="t m2" style="left:483.6px;top:577.1px;font-weight:normal;color:#2e2418;-webkit-text-stroke:0.18px #2e2418">0768HBQ            N100T208051280MB15.4VHOM W/PCH           I022 India DC Bangalore</div>
<div class="t m2" style="left:483.6px;top:586.0px;font-weight:normal;color:#222;-webkit-text-stroke:0.12px #222">0907                                                              1  EA</div>
<div class="t m2" style="left:483.6px;top:595.2px;font-weight:normal;color:#222;-webkit-text-stroke:0.12px #222">                                                          32,489.70  INR</div>
<div style="left:483px;top:603px;width:332px;height:1px;background:#58585c"></div></div></body></html>
